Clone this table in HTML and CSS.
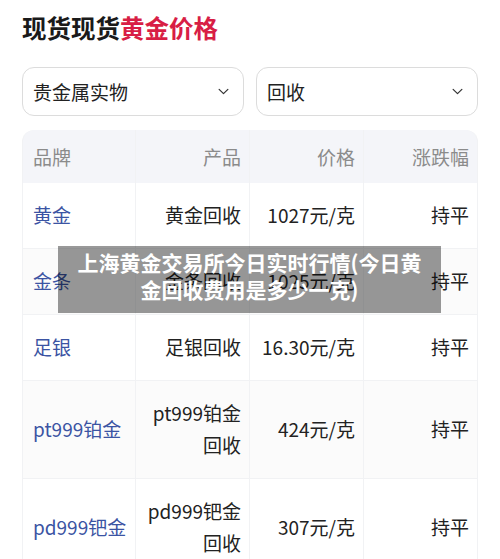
FILE: index.html
```html
<!DOCTYPE html>
<html lang="zh">
<head>
<meta charset="utf-8">
<link rel="stylesheet" href="styles.css">
</head>
<body>
<div class="page">
  <h1 class="title">现货现货<span class="accent">黄金价格</span></h1>
  <div class="filters">
    <div class="select"><span>贵金属实物</span><svg class="chev" viewBox="0 0 12 8" width="11" height="7"><path d="M1 1.5 L6 6.5 L11 1.5" fill="none" stroke="#333" stroke-width="1.4" stroke-linecap="round" stroke-linejoin="round"/></svg></div>
    <div class="select"><span>回收</span><svg class="chev" viewBox="0 0 12 8" width="11" height="7"><path d="M1 1.5 L6 6.5 L11 1.5" fill="none" stroke="#333" stroke-width="1.4" stroke-linecap="round" stroke-linejoin="round"/></svg></div>
  </div>
  <table class="prices">
    <thead>
      <tr><th class="brand">品牌</th><th>产品</th><th>价格</th><th>涨跌幅</th></tr>
    </thead>
    <tbody>
      <tr><td class="brand">黄金</td><td>黄金回收</td><td>1027元/克</td><td>持平</td></tr>
      <tr class="alt"><td class="brand">金条</td><td>金条回收</td><td>1025元/克</td><td>持平</td></tr>
      <tr><td class="brand">足银</td><td>足银回收</td><td>16.30元/克</td><td>持平</td></tr>
      <tr class="alt"><td class="brand">pt999铂金</td><td>pt999铂金回收</td><td>424元/克</td><td>持平</td></tr>
      <tr><td class="brand">pd999钯金</td><td>pd999钯金回收</td><td>307元/克</td><td>持平</td></tr>
    </tbody>
  </table>
  <div class="overlay">上海黄金交易所今日实时行情(今日黄金回收费用是多少一克)</div>
</div>
</body>
</html>
```

FILE: styles.css
```css
* { box-sizing: border-box; }
html, body { margin: 0; padding: 0; background: #fff; }
body {
  font-family: "Noto Sans CJK SC", "Noto Sans", sans-serif;
  color: #222;
  width: 500px;
  height: 559px;
  overflow: hidden;
}
.page {
  position: relative;
  padding: 12px 22px 0 22px;
}
.title {
  margin: 0;
  font-size: 24.5px;
  line-height: 32px;
  font-weight: 700;
  color: #1a1a1a;
}
.accent { color: #d81e45; }
.filters {
  display: grid;
  grid-template-columns: 1fr 1fr;
  gap: 12px;
  margin-top: 23px;
}
.select {
  height: 49px;
  border: 1px solid #dcdcdc;
  border-radius: 12px;
  display: flex;
  align-items: center;
  justify-content: space-between;
  padding: 0 14px 0 10px;
  font-size: 19px;
  color: #222;
}
.chev { display: block; }
.prices {
  margin-top: 14px;
  width: 456px;
  border-collapse: separate;
  border-spacing: 0;
  table-layout: fixed;
  font-size: 19px;
  line-height: 32px;
}
.prices th, .prices td {
  width: 114px;
  text-align: right;
  padding: 16px 8px 17px 8px;
  border-right: 1px solid #f1f2f4;
  border-bottom: 1px solid #f1f2f4;
  vertical-align: middle;
}
.prices th:first-child, .prices td:first-child { border-left: 1px solid #f1f2f4; }
.prices th {
  background: #f4f5f9;
  color: #8b8b8b;
  font-weight: 400;
  height: 53px;
  padding-top: 10px;
  padding-bottom: 10px;
  border-bottom: none;
}
.prices th:first-child { border-top-left-radius: 12px; }
.prices th:last-child { border-top-right-radius: 12px; }
.prices .brand {
  text-align: left;
  padding-left: 10px;
}
.prices td.brand { color: #3b54a3; }
.prices tr.alt td { background: #fbfbfb; }
.overlay {
  position: absolute;
  left: 58px;
  top: 246px;
  width: 383px;
  height: 67px;
  background: rgba(0, 0, 0, 0.4);
  color: #fff;
  font-weight: 700;
  font-size: 21px;
  line-height: 27px;
  text-align: center;
  padding: 3px 11px 0 11px;
}
```
